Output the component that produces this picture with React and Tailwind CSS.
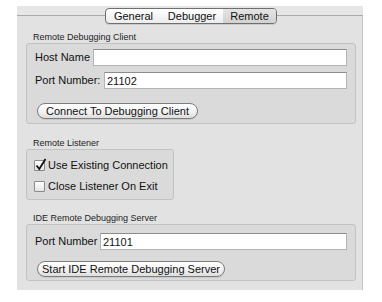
import React, { useState } from "react";

const font = { fontFamily: '"Liberation Sans", Arial, sans-serif' };

const GroupTitle = ({ children }) => (
  <div className="h-[11px] pl-[7px] text-[9px] leading-[11px] text-[#222]">{children}</div>
);

const Field = ({ label, value, labelW }) => (
  <div className="flex items-center h-[17px]">
    <span className={`${labelW} text-[11px] text-[#111]`}>{label}</span>
    <input
      defaultValue={value}
      className="flex-1 h-[17px] bg-white border border-[#b4b4b4] border-t-[#8c8c8c] px-[2px] text-[11px] text-[#111] outline-none"
    />
  </div>
);

const PillButton = ({ children, w }) => (
  <button
    className={`${w} h-[16px] rounded-full border border-[#7d7d7d] bg-gradient-to-b from-white via-[#f4f4f4] to-[#dedede] text-[11px] leading-[14px] text-[#111] shadow-[0_1px_0_rgba(0,0,0,0.08)]`}
  >
    {children}
  </button>
);

const Check = ({ checked, label, onClick }) => (
  <label className="flex items-center h-[12px] cursor-default" onClick={onClick}>
    <span className="relative w-[11px] h-[11px] border border-[#8a8a8a] bg-gradient-to-b from-white to-[#e4e4e4] rounded-[1px]">
      {checked && (
        <svg className="absolute -top-[3px] left-[0px]" width="12" height="13" viewBox="0 0 12 13">
          <path d="M1.5 7.5 L4.3 11 L10.5 1" fill="none" stroke="#111" strokeWidth="1.8" />
        </svg>
      )}
    </span>
    <span className="ml-[3px] text-[11px] text-[#111]">{label}</span>
  </label>
);

export default function App() {
  const [tab, setTab] = useState("Remote");
  const [useExisting, setUseExisting] = useState(true);
  const [closeOnExit, setCloseOnExit] = useState(false);
  const tabs = [
    { name: "General", w: "w-[55px]" },
    { name: "Debugger", w: "w-[62px]" },
    { name: "Remote", w: "w-[53px]" },
  ];

  return (
    <div className="w-[382px] h-[302px] bg-white pt-[6px]" style={font}>
      <div className="relative ml-[17px] w-[346px]">
        <div className="h-[9px] bg-[#e6e6e6]" />
        <div className="absolute left-[88px] top-[2px] flex h-[16px] rounded-[4px] border border-[#6f6f6f] bg-gradient-to-b from-white to-[#ececec] overflow-hidden shadow-[0_1px_0_rgba(0,0,0,0.1)]">
          {tabs.map((t) => (
            <button
              key={t.name}
              onClick={() => setTab(t.name)}
              className={`${t.w} h-full text-[11px] leading-[14px] text-[#111] ${
                tab === t.name ? "bg-gradient-to-b from-[#e4e4e4] to-[#d2d2d2]" : ""
              }`}
            >
              {t.name}
            </button>
          ))}
        </div>
        <div className="h-[275px] bg-[#e2e2e2] border-t border-t-[#a9a9a9] border-r border-r-[#c4c4c4] pl-[9px] pr-[6px] pt-[16px]">
          <GroupTitle>Remote Debugging Client</GroupTitle>
          <div className="w-[330px] h-[81px] border border-[#c2c2c2] rounded-[3px] bg-[#dadada] px-[8px] pt-[5px]">
            <Field label="Host Name" value="" labelW="w-[58px]" />
            <div className="h-[6px]" />
            <Field label="Port Number:" value="21102" labelW="w-[69px]" />
            <div className="mt-[9px] pl-[2px]">
              <PillButton w="w-[161px]">Connect To Debugging Client</PillButton>
            </div>
          </div>

          <div className="h-[14px]" />
          <GroupTitle>Remote Listener</GroupTitle>
          <div className="w-[148px] h-[51px] border border-[#c2c2c2] rounded-[3px] bg-[#dadada] pl-[7px] pt-[9px]">
            <Check checked={useExisting} label="Use Existing Connection" onClick={() => setUseExisting(!useExisting)} />
            <div className="h-[9px]" />
            <Check checked={closeOnExit} label="Close Listener On Exit" onClick={() => setCloseOnExit(!closeOnExit)} />
          </div>

          <div className="h-[13px]" />
          <GroupTitle>IDE Remote Debugging Server</GroupTitle>
          <div className="w-[330px] h-[57px] border border-[#c2c2c2] rounded-[3px] bg-[#dadada] px-[8px] pt-[8px]">
            <Field label="Port Number" value="21101" labelW="w-[65px]" />
            <div className="mt-[6px] pl-[2px]">
              <PillButton w="w-[188px]">Start IDE Remote Debugging Server</PillButton>
            </div>
          </div>
        </div>
      </div>
    </div>
  );
}
